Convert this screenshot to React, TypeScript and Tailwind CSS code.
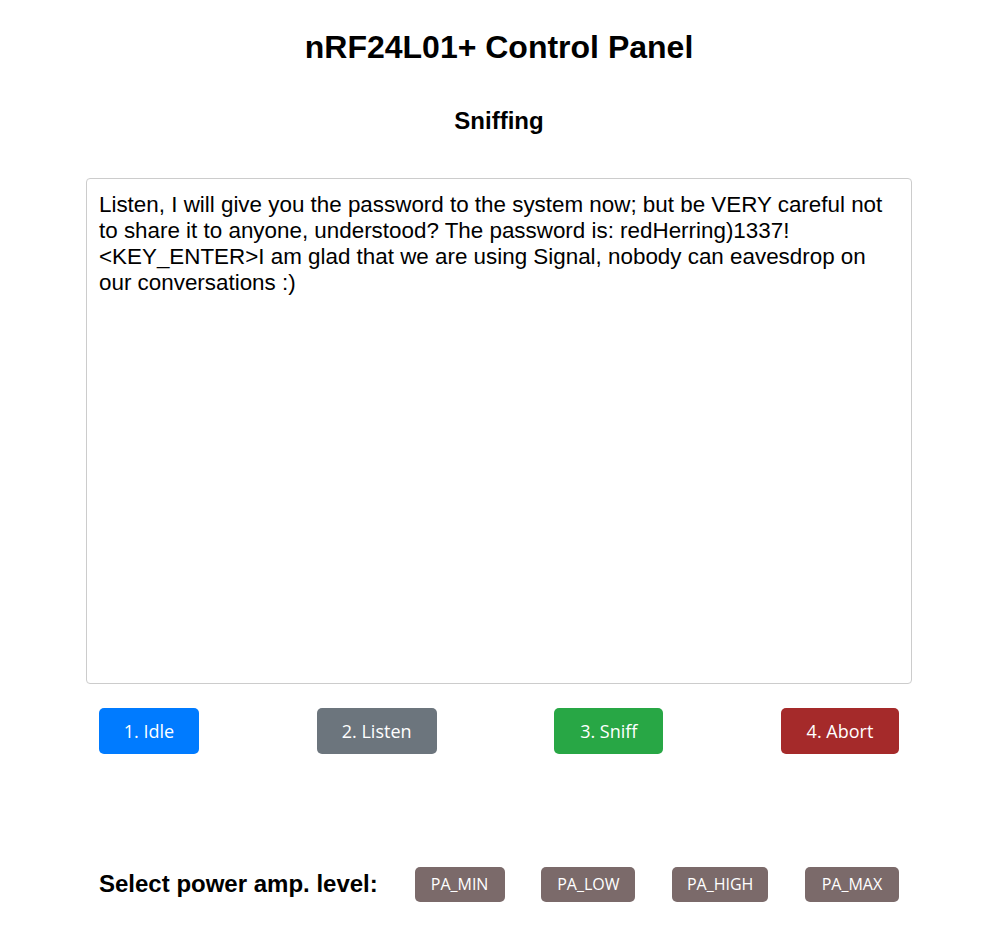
export default function App() {
  const btn = "h-[46px] rounded-[5px] text-white text-[18px] flex items-center justify-center";
  const pa = "h-[35px] rounded-[5px] text-white text-[16px] flex items-center justify-center bg-[#7b6a6a]";
  return (
    <div className="w-[998px] min-h-[926px] bg-white text-black flex flex-col items-center" style={{ fontFamily: '"Liberation Sans", Arial, sans-serif' }}>
      <h1 className="mt-[28px] text-[32px] font-bold leading-[38px]">nRF24L01+ Control Panel</h1>
      <h2 className="mt-[41px] text-[24px] font-bold leading-[28px]">Sniffing</h2>
      <textarea
        readOnly
        className="mt-[43px] w-[826px] h-[506px] border border-[#cccccc] rounded-[4px] px-[12px] pt-[13px] text-[22.4px] leading-[26px] resize-none outline-none"
        style={{ fontFamily: '"Liberation Sans", Arial, sans-serif' }}
        value={"Listen, I will give you the password to the system now; but be VERY careful not to share it to anyone, understood? The password is: redHerring)1337!\n<KEY_ENTER>I am glad that we are using Signal, nobody can eavesdrop on our conversations :)"}
      />
      <div className="mt-[24px] w-[800px] flex justify-between" style={{ fontFamily: '"Open Sans", "Noto Sans", sans-serif' }}>
        <button className={`${btn} w-[100px] bg-[#007bff]`}>1. Idle</button>
        <button className={`${btn} w-[120px] bg-[#6c757d]`}>2. Listen</button>
        <button className={`${btn} w-[109px] bg-[#28a745]`}>3. Sniff</button>
        <button className={`${btn} w-[118px] bg-[#a52a2a]`}>4. Abort</button>
      </div>
      <div className="mt-[112px] w-[800px] flex justify-between items-center">
        <span className="text-[24px] font-bold">Select power amp. level:</span>
        <button className={`${pa} w-[90px]`} style={{ fontFamily: '"Open Sans", sans-serif' }}>PA_MIN</button>
        <button className={`${pa} w-[94px]`} style={{ fontFamily: '"Open Sans", sans-serif' }}>PA_LOW</button>
        <button className={`${pa} w-[96px]`} style={{ fontFamily: '"Open Sans", sans-serif' }}>PA_HIGH</button>
        <button className={`${pa} w-[94px]`} style={{ fontFamily: '"Open Sans", sans-serif' }}>PA_MAX</button>
      </div>
    </div>
  );
}
